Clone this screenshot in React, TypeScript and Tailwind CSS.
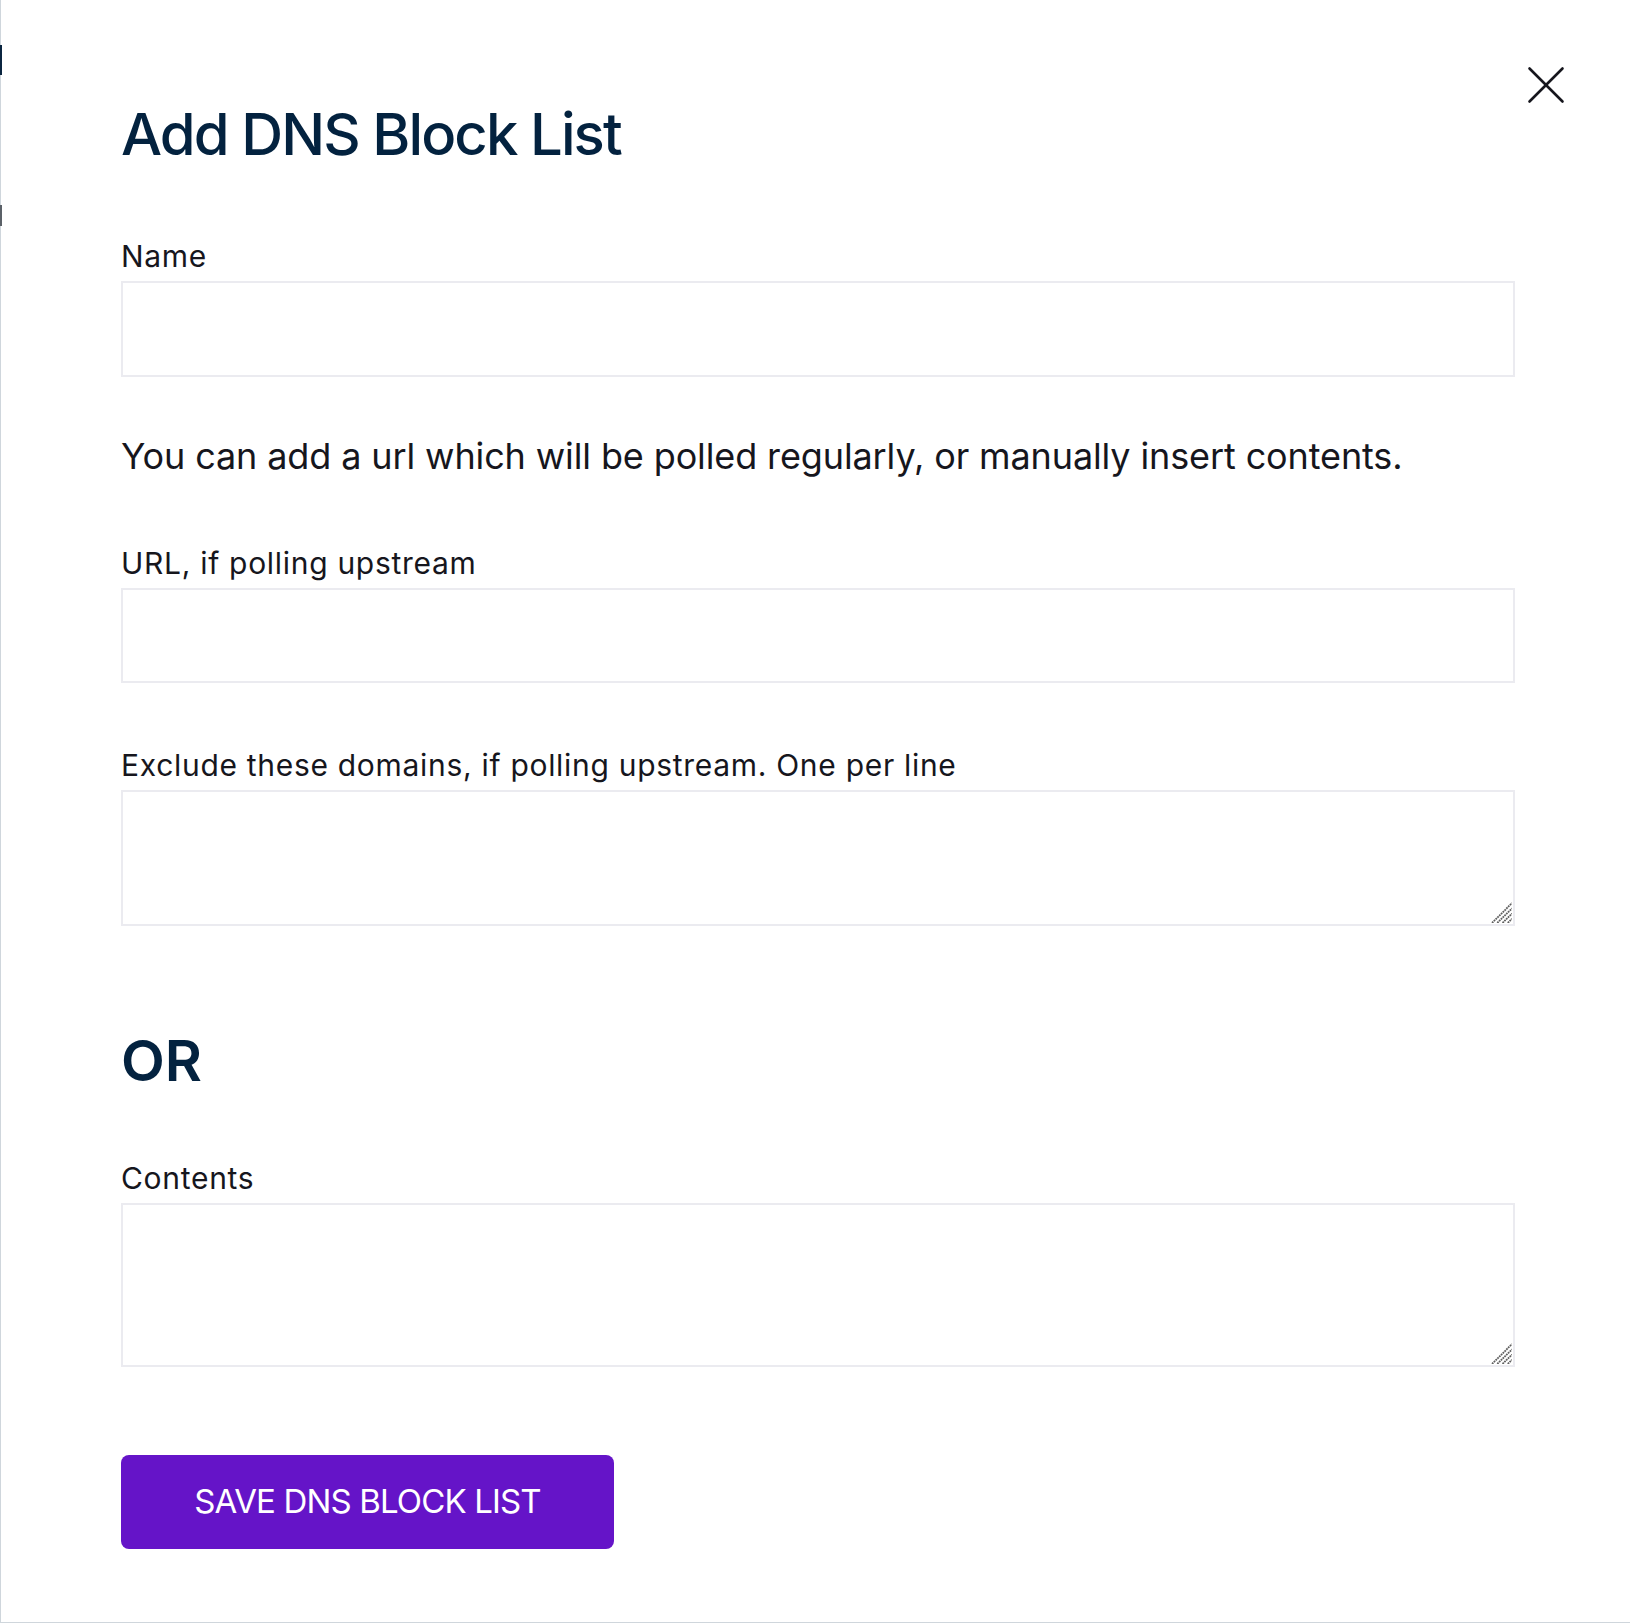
const font = { fontFamily: 'Inter, "Noto Sans", sans-serif' };

function Label({ children }: { children: string }) {
  return (
    <label className="block text-[30px] leading-[36px] tracking-[0.7px] text-[#16161d] mb-[7px]">{children}</label>
  );
}

function ResizeGrip() {
  return (
    <svg className="absolute right-[3px] bottom-[3px] w-[21px] h-[21px] pointer-events-none" viewBox="0 0 20 20">
      <g stroke="#5f5f5f" strokeWidth="1.7" strokeDasharray="1.7 0.7">
        <line x1="1" y1="20" x2="20" y2="1" />
        <line x1="6" y1="20" x2="20" y2="6" />
        <line x1="11" y1="20" x2="20" y2="11" />
        <line x1="16" y1="20" x2="20" y2="16" />
      </g>
    </svg>
  );
}

function Area({ h }: { h: string }) {
  return (
    <div className="relative">
      <textarea className={`block w-full ${h} border-2 border-[#ebebf0] outline-none p-4 text-[28px] resize-none`} />
      <ResizeGrip />
    </div>
  );
}

export default function App() {
  return (
    <div className="w-[1630px] h-[1624px] bg-white" style={font}>
      <div className="relative h-[1623px] border-l border-b border-[#cfd6dc] bg-white">
        {/* bits of the page behind the drawer */}
        <div className="absolute left-[-1px] top-[45px] w-[2px] h-[30px] bg-[#0b2540]" />
        <div className="absolute left-[-1px] top-[205px] w-[2px] h-[21px] bg-[#5b6168]" />

        <button className="absolute left-[1525px] top-[65px] w-[40px] h-[40px] flex items-center justify-center">
          <svg viewBox="0 0 40 40" className="w-[40px] h-[40px]">
            <g stroke="#16161d" strokeWidth="2.6" strokeLinecap="round">
              <line x1="3.5" y1="3.5" x2="36.5" y2="36.5" />
              <line x1="36.5" y1="3.5" x2="3.5" y2="36.5" />
            </g>
          </svg>
        </button>

        <div className="pl-[120px] pt-[99px] w-[1514px]">
          <h2 className="text-[58px] leading-[70px] font-medium text-[#03223f] tracking-[-1.9px]">Add DNS Block List</h2>

          <div className="mt-[69px]">
            <Label>Name</Label>
            <input className="block w-full h-[96px] border-2 border-[#ebebf0] outline-none px-4 text-[28px]" />
          </div>

          <p className="mt-[57px] text-[36px] leading-[44px] tracking-[-0.12px] text-[#16161d]">
            You can add a url which will be polled regularly, or manually insert contents.
          </p>

          <div className="mt-[67px]">
            <Label>URL, if polling upstream</Label>
            <input className="block w-full h-[95px] border-2 border-[#ebebf0] outline-none px-4 text-[28px]" />
          </div>

          <div className="mt-[64px]">
            <Label>Exclude these domains, if polling upstream. One per line</Label>
            <Area h="h-[136px]" />
          </div>

          <h2 className="mt-[100px] text-[57px] leading-[70px] font-semibold text-[#03223f]">OR</h2>

          <div className="mt-[64px]">
            <Label>Contents</Label>
            <Area h="h-[164px]" />
          </div>

          <button className="mt-[88px] w-[493px] h-[94px] rounded-[8px] bg-[#6514c8] text-white text-[33px] font-normal tracking-[-0.85px] uppercase">
            Save DNS Block List
          </button>
        </div>
      </div>
    </div>
  );
}
